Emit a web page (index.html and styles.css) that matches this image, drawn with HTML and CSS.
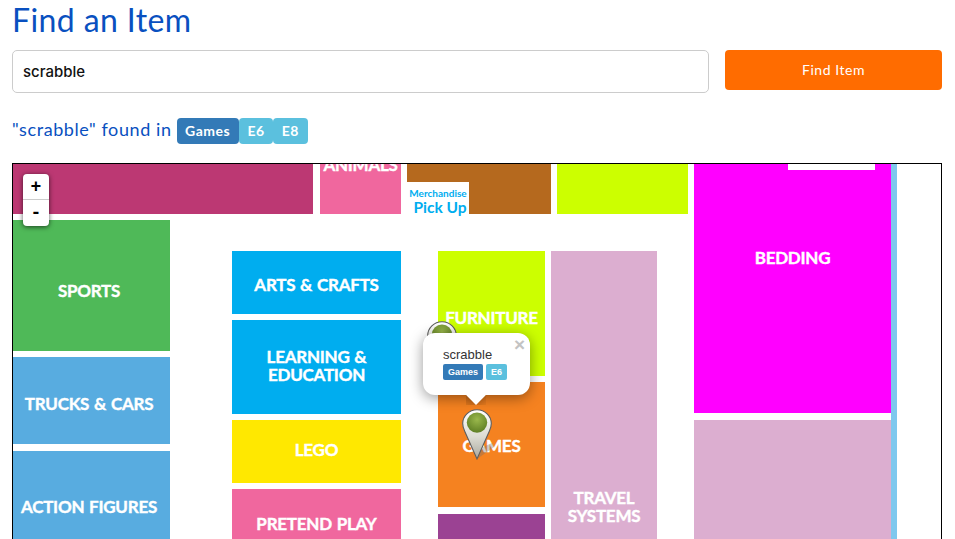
FILE: index.html
```html
<!DOCTYPE html>
<html lang="en">
  <head>
    <meta charset="UTF-8" />
    <meta name="viewport" content="width=device-width, initial-scale=1.0" />
    <title>Find an Item</title>
    <link rel="stylesheet" href="styles.css">
  </head>
  <body>
    <div class="page">
      <h1 class="title">Find an Item</h1>
      <form class="search">
        <input class="search-input" type="text" value="scrabble" />
        <button class="search-button" type="button">Find Item</button>
      </form>
      <div class="result">
        <span class="result-text">"scrabble" found in</span>
        <span class="labels">
          <span class="label label-primary">Games</span><span class="label label-info">E6</span><span class="label label-info">E8</span>
        </span>
      </div>
      <div class="map">
        <div class="tile crimson"></div>
        <div class="tile animals">ANIMALS</div>
        <div class="tile brown"></div>
        <div class="pickup"><span class="pickup-small">Merchandise</span><span class="pickup-big">Pick Up</span></div>
        <div class="tile lime-top"></div>
        <div class="tile bedding">BEDDING</div>
        <div class="tile bedding-notch"></div>
        <div class="tile strip"></div>
        <div class="tile sports">SPORTS</div>
        <div class="tile trucks">TRUCKS &amp; CARS</div>
        <div class="tile action">ACTION FIGURES</div>
        <div class="tile arts">ARTS &amp; CRAFTS</div>
        <div class="tile learning">LEARNING &amp;<br />EDUCATION</div>
        <div class="tile lego">LEGO</div>
        <div class="tile pretend">PRETEND PLAY</div>
        <div class="tile furniture">FURNITURE</div>
        <div class="tile games">GAMES</div>
        <div class="tile purple"></div>
        <div class="tile travel">TRAVEL<br />SYSTEMS</div>
        <div class="tile lower-pink"></div>

        <svg class="pin pin-back" viewBox="0 0 30 51"><use href="#pin-shape" /></svg>

        <div class="popup">
          <span class="popup-close">&times;</span>
          <div class="popup-text">scrabble</div>
          <div class="popup-labels">
            <span class="popup-label label-primary">Games</span>
            <span class="popup-label label-info">E6</span>
          </div>
          <div class="popup-tip"></div>
        </div>

        <svg class="pin pin-front" viewBox="0 0 30 51">
          <defs>
            <linearGradient id="pin-body" x1="0" y1="0" x2="0" y2="1">
              <stop offset="0" stop-color="#ffffff" />
              <stop offset="0.55" stop-color="#dcdbd2" />
              <stop offset="1" stop-color="#a9a89e" />
            </linearGradient>
            <radialGradient id="pin-ball" cx="0.5" cy="0.35" r="0.65">
              <stop offset="0" stop-color="#9ab84c" />
              <stop offset="1" stop-color="#5f7f24" />
            </radialGradient>
            <g id="pin-shape">
              <path d="M15 .7C7 .7.7 7 .7 14.6c0 3 .8 5.3 2 7.6L15 50 27.3 22.2c1.2-2.3 2-4.6 2-7.6C29.3 7 23 .7 15 .7z" fill="url(#pin-body)" stroke="#5d5d5d" stroke-width="1.1" />
              <circle cx="15" cy="13.6" r="10.2" fill="url(#pin-ball)" />
            </g>
          </defs>
          <polygon class="pin-shadow" points="15,50 21,38 30,34 32,38" />
          <use href="#pin-shape" />
        </svg>

        <div class="zoom">
          <div class="zoom-btn zoom-in">+</div>
          <div class="zoom-btn">-</div>
        </div>
      </div>
    </div>
  </body>
</html>
```

FILE: styles.css
```css
html,
body {
  height: 100%;
}
body {
  margin: 0;
  overflow: hidden;
  background: #fff;
  font-family: Lato, "Open Sans", sans-serif;
}
.page {
  padding: 0 13px 0 12px;
}
.title {
  margin: 0;
  padding-top: 1px;
  height: 50px;
  box-sizing: border-box;
  font-size: 32px;
  line-height: 37px;
  font-weight: 400;
  color: #0950c0;
  letter-spacing: 0.4px;
}
.search {
  display: flex;
  gap: 16px;
  align-items: flex-start;
  margin: 0;
  height: 68px;
}
.search-input {
  flex: 1;
  height: 43px;
  box-sizing: border-box;
  padding: 0 10px;
  border: 1px solid #ccc;
  border-radius: 5px;
  font-family: Inter, sans-serif;
  font-size: 15px;
  font-weight: 500;
  color: #111;
}
.search-button {
  width: 217px;
  height: 40px;
  padding: 0 0 2px;
  border: none;
  border-radius: 4px;
  background: #ff6c00;
  color: #fff;
  font-family: Lato, sans-serif;
  font-size: 14px;
  letter-spacing: 0.55px;
}
.result {
  display: flex;
  align-items: center;
  gap: 5px;
  height: 26px;
  margin-bottom: 19px;
  font-size: 18px;
  letter-spacing: 0.58px;
  color: #0950c0;
}
.result-text {
  padding-bottom: 5px;
}
.labels {
  display: flex;
}
.label {
  display: block;
  height: 26px;
  padding: 0 8.6px;
  border-radius: 4px;
  font-size: 14px;
  line-height: 25px;
  font-weight: 700;
  letter-spacing: 0.5px;
  color: #fff;
}
.label-primary {
  background: #337ab7;
}
.label-info {
  background: #5bc0de;
}

/* map picture */
.map {
  position: relative;
  height: 400px;
  border: 1px solid #000;
  overflow: hidden;
  background: #fff;
}
.tile {
  position: absolute;
  display: flex;
  align-items: center;
  justify-content: center;
  text-align: center;
  color: #fff;
  font-weight: 700;
  font-size: 17px;
  line-height: 18px;
  letter-spacing: -0.25px;
  word-spacing: 1px;
  -webkit-text-stroke: 0.4px #fff;
}
.crimson {
  left: 0;
  top: 0;
  width: 300px;
  height: 50px;
  background: #bc3873;
}
.animals {
  left: 307px;
  top: -8px;
  width: 81px;
  height: 58px;
  align-items: flex-start;
  background: #f0679e;
}
.brown {
  left: 394px;
  top: 0;
  width: 144px;
  height: 50px;
  background: #b5691e;
}
.pickup {
  position: absolute;
  left: 394px;
  top: 18px;
  width: 62px;
  height: 32px;
  display: flex;
  flex-direction: column;
  align-items: center;
  background: #fff;
  color: #00adef;
  font-weight: 700;
  white-space: nowrap;
}
.pickup-small {
  font-size: 10px;
  line-height: 12px;
  margin-top: 5px;
}
.pickup-big {
  font-size: 15.5px;
  line-height: 17px;
  margin-left: 4px;
}
.lime-top {
  left: 544px;
  top: 0;
  width: 131px;
  height: 50px;
  background: #ccff00;
}
.bedding {
  left: 681px;
  top: 0;
  width: 197px;
  height: 249px;
  padding-top: 85px;
  box-sizing: border-box;
  align-items: flex-start;
  background: #ff00ff;
}
.bedding-notch {
  left: 775px;
  top: 0;
  width: 87px;
  height: 6px;
  background: #fff;
}
.strip {
  left: 878px;
  top: 0;
  width: 6px;
  height: 400px;
  background: #7fc8ee;
}
.sports {
  left: 0;
  top: 56px;
  width: 157px;
  height: 131px;
  padding: 10px 5px 0 0;
  box-sizing: border-box;
  background: #4fb958;
}
.trucks {
  left: 0;
  top: 193px;
  width: 157px;
  height: 87px;
  padding: 6px 5px 0 0;
  box-sizing: border-box;
  background: #58ace0;
}
.action {
  left: 0;
  top: 287px;
  width: 157px;
  height: 113px;
  align-items: flex-start;
  padding: 47px 5px 0 0;
  box-sizing: border-box;
  background: #58ace0;
}
.arts {
  left: 219px;
  top: 87px;
  width: 169px;
  height: 63px;
  padding-top: 4px;
  box-sizing: border-box;
  background: #00adef;
}
.learning {
  left: 219px;
  top: 156px;
  width: 169px;
  height: 94px;
  align-items: flex-start;
  padding-top: 28px;
  box-sizing: border-box;
  background: #00adef;
}
.lego {
  left: 219px;
  top: 256px;
  width: 169px;
  height: 63px;
  padding-bottom: 4px;
  box-sizing: border-box;
  background: #ffe800;
}
.pretend {
  left: 219px;
  top: 325px;
  width: 169px;
  height: 75px;
  align-items: flex-start;
  padding-top: 26px;
  box-sizing: border-box;
  background: #f0679e;
}
.furniture {
  left: 425px;
  top: 87px;
  width: 107px;
  height: 125px;
  align-items: flex-start;
  padding-top: 58px;
  box-sizing: border-box;
  background: #ccff00;
}
.games {
  left: 425px;
  top: 218px;
  width: 107px;
  height: 125px;
  align-items: flex-start;
  padding-top: 55px;
  box-sizing: border-box;
  background: #f58220;
}
.purple {
  left: 425px;
  top: 350px;
  width: 107px;
  height: 50px;
  background: #9b4293;
}
.travel {
  left: 538px;
  top: 87px;
  width: 106px;
  height: 313px;
  align-items: flex-start;
  padding-top: 238px;
  box-sizing: border-box;
  background: #dcaed0;
}
.lower-pink {
  left: 681px;
  top: 256px;
  width: 197px;
  height: 144px;
  background: #dcaed0;
}

.pin {
  position: absolute;
  width: 30px;
  height: 51px;
  overflow: visible;
}
.pin-back {
  left: 414px;
  top: 157px;
}
.pin-front {
  left: 449px;
  top: 245px;
}
.pin-shadow {
  fill: rgba(110, 110, 110, 0.35);
}
.popup {
  position: absolute;
  left: 410px;
  top: 169px;
  width: 107px;
  height: 62px;
  box-sizing: border-box;
  padding: 15px 0 0 20px;
  background: #fff;
  border-radius: 12px;
  box-shadow: 0 3px 14px rgba(0, 0, 0, 0.4);
  font-family: "Liberation Sans", Arial, sans-serif;
}
.popup-close {
  position: absolute;
  right: 5px;
  top: 2px;
  font-size: 19px;
  line-height: 19px;
  font-weight: 700;
  color: #c3c3c3;
}
.popup-text {
  font-size: 13px;
  line-height: 14px;
  color: #333;
}
.popup-labels {
  display: flex;
  gap: 3px;
  margin-top: 2px;
}
.popup-label {
  height: 16px;
  padding: 0 5px;
  border-radius: 2px;
  font-size: 9px;
  line-height: 16px;
  font-weight: 700;
  color: #fff;
}
.popup-tip {
  position: absolute;
  left: 43px;
  bottom: -10px;
  width: 20px;
  height: 10px;
  overflow: hidden;
}
.popup-tip::after {
  content: "";
  display: block;
  width: 14px;
  height: 14px;
  margin: -7px auto 0;
  background: #fff;
  transform: rotate(45deg);
  box-shadow: 0 3px 14px rgba(0, 0, 0, 0.4);
}

.zoom {
  position: absolute;
  left: 10px;
  top: 10px;
  width: 26px;
  border-radius: 4px;
  background: #fff;
  box-shadow: 0 1px 5px rgba(0, 0, 0, 0.65);
}
.zoom-btn {
  height: 26px;
  text-align: center;
  font-family: "Liberation Mono", monospace;
  font-size: 18px;
  line-height: 26px;
  font-weight: 700;
  color: #000;
}
.zoom-in {
  height: 25px;
  border-bottom: 1px solid #ccc;
}
```
